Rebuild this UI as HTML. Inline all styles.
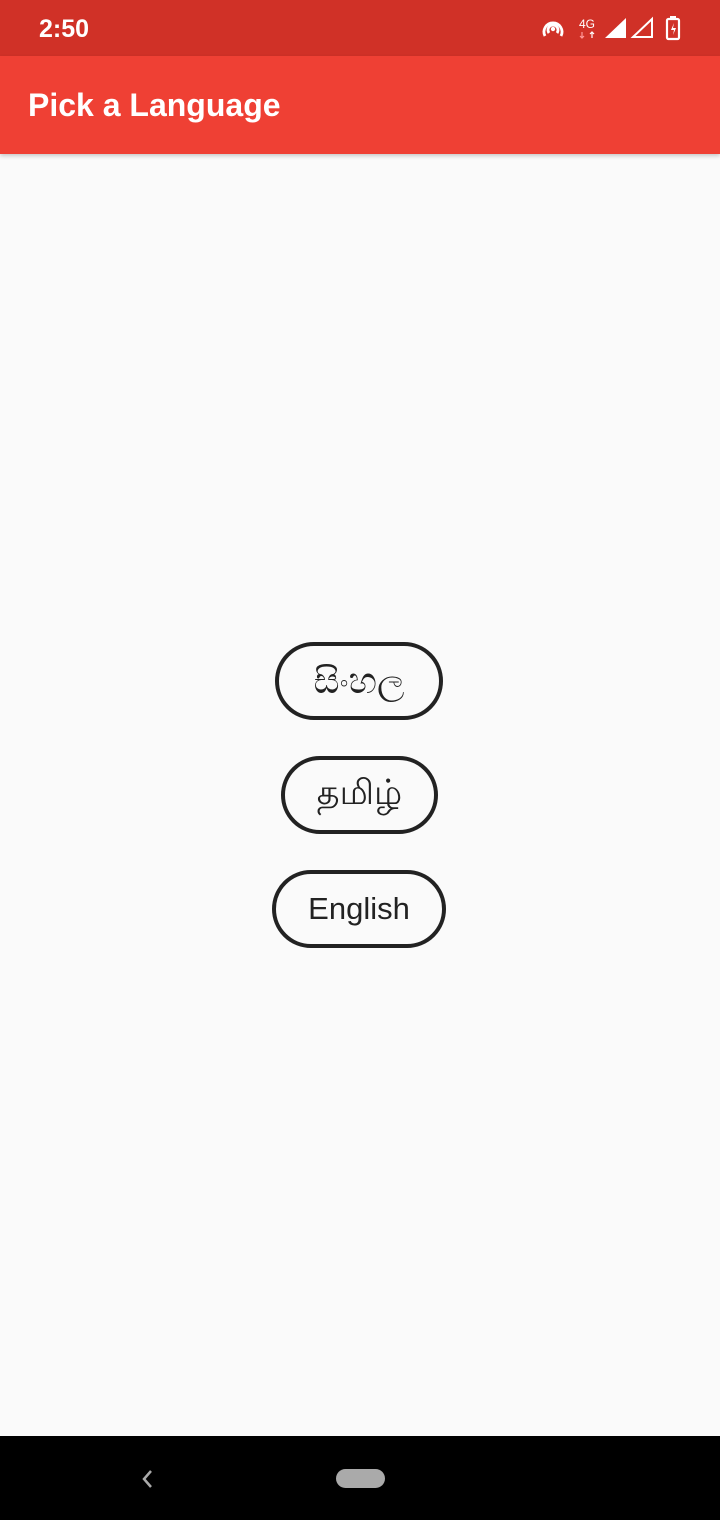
<!DOCTYPE html>
<html><head><meta charset="utf-8"><style>
*{margin:0;padding:0;box-sizing:border-box}
body{width:720px;height:1520px;background:#fafafa;font-family:"Liberation Sans",sans-serif;position:relative;overflow:hidden}
.sb{position:absolute;top:0;left:0;width:720px;height:56px;background:#d03127}
.sb .t{position:absolute;left:39px;top:15px;color:#fff;font-size:25px;font-weight:bold}
.ab{position:absolute;top:56px;left:0;width:720px;height:98px;background:#ef4034;box-shadow:0 2px 4px rgba(0,0,0,.2)}
.ab .t{position:absolute;left:28px;top:31px;color:#fff;font-size:32px;font-weight:bold}
.btn{position:absolute;border:4px solid #222;border-radius:40px;display:flex;align-items:center;justify-content:center;color:#222;font-size:32px;font-family:"Liberation Sans","DejaVu Sans",sans-serif}
.nav{position:absolute;left:0;top:1436px;width:720px;height:84px;background:#000}
</style></head><body>
<div class="sb"><span class="t">2:50</span>
<svg style="position:absolute;left:540px;top:14px" width="145" height="28" viewBox="0 0 145 28">
<g fill="none" stroke="#fff" stroke-width="2.8"><path d="M5 22 A9 9 0 1 1 21 22"/><path d="M9 19 A5 5 0 1 1 17 19"/></g><circle cx="13" cy="15" r="2.2" fill="#fff"/>
<text x="39" y="14" fill="#fff" font-size="12" font-family="Liberation Sans">4G</text>
<path d="M42 18v6M40 22l2 2 2-2" stroke="#f99" stroke-width="1.2" fill="none"/><path d="M52 24v-6M50 20l2-2 2 2" stroke="#fff" stroke-width="1.2" fill="none"/>
<path d="M65 24L86 4V24Z" fill="#fff"/>
<path d="M93 23L112 5V23Z" fill="none" stroke="#fff" stroke-width="2"/>
<rect x="127" y="5" width="12" height="20" rx="1.5" fill="none" stroke="#fff" stroke-width="2.2"/><rect x="130" y="2" width="6" height="3" fill="#fff"/>
<path d="M134 9l-3 7h3l-1 5 3-7h-3z" fill="#fff"/>
</svg></div>
<div class="ab"><span class="t">Pick a Language</span></div>
<div class="btn" style="left:275px;top:642px;width:168px;height:78px;font-size:36px">සිංහල</div>
<div class="btn" style="left:281px;top:756px;width:157px;height:78px;font-size:35px">தமிழ்</div>
<div class="btn" style="left:272px;top:870px;width:174px;height:78px;font-size:31px">English</div>
<div class="nav">
<svg style="position:absolute;left:140px;top:32px" width="16" height="22"><path d="M11 3L4 11l7 8" stroke="#aaa" stroke-width="2.5" fill="none"/></svg>
<div style="position:absolute;left:336px;top:33px;width:49px;height:19px;border-radius:10px;background:#aaa"></div>
</div>
</body></html>
